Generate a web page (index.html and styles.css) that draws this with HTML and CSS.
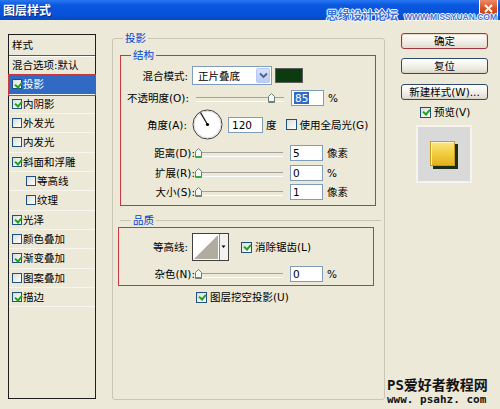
FILE: index.html
```html
<!DOCTYPE html>
<html>
<head>
<meta charset="utf-8">
<title>图层样式</title>
<link rel="stylesheet" href="styles.css">
</head>
<body>
<div class="window">
  <header class="titlebar">
    <span class="title">图层样式</span>
    <span class="close"><svg width="9" height="9" viewBox="0 0 9 9"><path d="M1 1L8 8M8 1L1 8" stroke="#fff" stroke-width="2"/></svg></span>
    <div class="wm-top"><span class="wm-cn">思缘设计论坛</span><span class="wm-en">WWW.MISSYUAN.COM</span></div>
  </header>

  <div class="dialog">
    <aside class="styles-panel">
      <div class="panel-head">样式</div>
      <ul class="style-list">
        <li class="item">混合选项:默认</li>
        <li class="item sel"><span class="cb on"></span>投影</li>
        <li class="item"><span class="cb on"></span>内阴影</li>
        <li class="item"><span class="cb"></span>外发光</li>
        <li class="item"><span class="cb"></span>内发光</li>
        <li class="item"><span class="cb on"></span>斜面和浮雕</li>
        <li class="item sub"><span class="cb"></span>等高线</li>
        <li class="item sub"><span class="cb"></span>纹理</li>
        <li class="item"><span class="cb on"></span>光泽</li>
        <li class="item"><span class="cb"></span>颜色叠加</li>
        <li class="item"><span class="cb on"></span>渐变叠加</li>
        <li class="item"><span class="cb"></span>图案叠加</li>
        <li class="item"><span class="cb on"></span>描边</li>
      </ul>
    </aside>

    <fieldset class="main">
      <legend>投影</legend>
      <fieldset class="struct">
        <legend>结构</legend>
        <div class="row r1">
          <span class="lbl w67">混合模式:</span>
          <span class="select"><span class="sel-text">正片叠底</span><span class="dd"><svg width="9" height="7" viewBox="0 0 9 7"><path d="M1 1.5L4.5 5L8 1.5" fill="none" stroke="#4d6185" stroke-width="1.8"/></svg></span></span>
          <span class="swatch"></span>
        </div>
        <div class="row r2">
          <span class="lbl w68">不透明度(O):</span>
          <span class="slider s6"><svg class="thumb" style="left:72px" width="7" height="10" viewBox="0 0 7 10"><path d="M0.5 3.5L3.5 0.5L6.5 3.5V9.5H0.5Z" fill="#f4f8f2" stroke="#6f7f74"/><path d="M1 8.5H6" stroke="#3caa55"/></svg></span>
          <span class="input"><span class="hl">85</span></span>
          <span class="unit">%</span>
        </div>
        <div class="row r3">
          <span class="lbl w66">角度(A):</span>
          <svg class="dial" width="31" height="31" viewBox="0 0 31 31"><circle cx="15.5" cy="15.5" r="14.5" fill="#fff" stroke="#3a3a3a"/><circle cx="15.5" cy="15.5" r="13.3" fill="none" stroke="#dadada"/><line x1="15.5" y1="15.5" x2="8.5" y2="3.6" stroke="#222" stroke-width="1.3"/><circle cx="15.5" cy="15.5" r="1.6" fill="#000"/></svg>
          <span class="input wide">120</span>
          <span class="unit u3">度</span>
          <span class="cb big gl"></span>
          <span class="cbtext">使用全局光(G)</span>
        </div>
        <div class="row r4">
          <span class="lbl w74">距离(D):</span>
          <span class="slider"><svg class="thumb" style="left:0" width="7" height="10" viewBox="0 0 7 10"><path d="M0.5 3.5L3.5 0.5L6.5 3.5V9.5H0.5Z" fill="#f4f8f2" stroke="#6f7f74"/><path d="M1 8.5H6" stroke="#3caa55"/></svg></span>
          <span class="input">5</span>
          <span class="unit">像素</span>
        </div>
        <div class="row r5">
          <span class="lbl w74">扩展(R):</span>
          <span class="slider"><svg class="thumb" style="left:0" width="7" height="10" viewBox="0 0 7 10"><path d="M0.5 3.5L3.5 0.5L6.5 3.5V9.5H0.5Z" fill="#f4f8f2" stroke="#6f7f74"/><path d="M1 8.5H6" stroke="#3caa55"/></svg></span>
          <span class="input">0</span>
          <span class="unit">%</span>
        </div>
        <div class="row r6">
          <span class="lbl w74">大小(S):</span>
          <span class="slider"><svg class="thumb" style="left:0" width="7" height="10" viewBox="0 0 7 10"><path d="M0.5 3.5L3.5 0.5L6.5 3.5V9.5H0.5Z" fill="#f4f8f2" stroke="#6f7f74"/><path d="M1 8.5H6" stroke="#3caa55"/></svg></span>
          <span class="input">1</span>
          <span class="unit">像素</span>
        </div>
      </fieldset>

      <div class="q-head"><span>品质</span></div>
      <div class="quality">
        <div class="row q1">
          <span class="lbl w69">等高线:</span>
          <svg class="contour" width="37" height="28" viewBox="0 0 37 28"><rect x="0.5" y="0.5" width="36" height="27" fill="#fff" stroke="#404040"/><path d="M2 26L26 2V26Z" fill="#b0aca0"/><rect x="27" y="1" width="9" height="26" fill="#f3f2ee"/><line x1="27.5" y1="1" x2="27.5" y2="27" stroke="#8a8a8a"/><path d="M29.5 12.5h4l-2 2.5z" fill="#000"/></svg>
          <span class="cb big on aa"></span>
          <span class="cbtext">消除锯齿(L)</span>
        </div>
        <div class="row q2">
          <span class="lbl w76">杂色(N):</span>
          <span class="slider"><svg class="thumb" style="left:0" width="7" height="10" viewBox="0 0 7 10"><path d="M0.5 3.5L3.5 0.5L6.5 3.5V9.5H0.5Z" fill="#f4f8f2" stroke="#6f7f74"/><path d="M1 8.5H6" stroke="#3caa55"/></svg></span>
          <span class="input">0</span>
          <span class="unit">%</span>
        </div>
      </div>
      <div class="row knock"><span class="cb big on"></span><span class="cbtext">图层挖空投影(U)</span></div>
    </fieldset>

    <div class="actions">
      <div class="btn default">确定</div>
      <div class="btn b2">复位</div>
      <div class="btn b3">新建样式(W)...</div>
      <div class="preview-row"><span class="cb big on"></span><span class="cbtext">预览(V)</span></div>
      <div class="preview"><span class="chip"></span></div>
    </div>
  </div>

  <div class="wm-bottom"><div class="wm-b1">PS爱好者教程网</div><div class="wm-b2">www. psahz. com</div></div>
</div>
</body>
</html>
```

FILE: styles.css
```css
* { box-sizing: border-box; margin: 0; padding: 0; }
html, body { width: 500px; height: 409px; overflow: hidden; }
body {
  background: #ece9d8;
  font-family: "DejaVu Sans", "Noto Sans CJK SC", sans-serif;
  font-size: 10.5px;
  line-height: 14px;
  color: #000;
}
.window { position: relative; height: 409px; }

/* title bar */
.titlebar {
  position: relative;
  height: 20px;
  display: flex;
  align-items: flex-start;
  background: linear-gradient(#2a78f2, #0a58e0 25%, #0652d8 75%, #0a47c2);
}
.title {
  color: #fff;
  font-family: "Noto Sans CJK SC", sans-serif;
  font-weight: bold;
  font-size: 12px;
  line-height: 14px;
  padding: 3px 0 0 3px;
  text-shadow: 1px 1px 0 #0a2a7a;
}
.close {
  margin-left: auto;
  margin-right: 2px;
  width: 19px;
  height: 17px;
  border: 1px solid #fff;
  border-top: 0;
  border-radius: 0 0 3px 3px;
  background: linear-gradient(#ec8a68, #d9501f 55%, #c73c18);
  display: flex;
  align-items: center;
  justify-content: center;
}
.wm-top {
  position: absolute;
  left: 326px;
  top: 8px;
  display: flex;
  align-items: baseline;
  gap: 6px;
  z-index: 2;
}
.wm-cn {
  font-family: "Noto Sans CJK SC", sans-serif;
  font-size: 12px;
  line-height: 14px;
  font-weight: bold;
  color: #3f74d8;
  text-shadow: -1px 0 #fff, 1px 0 #fff, 0 -1px #fff, 0 1px #fff;
}
.wm-en {
  font-family: "Liberation Sans", sans-serif;
  font-size: 8.5px;
  font-weight: bold;
  color: #3f74d8;
  text-shadow: -1px 0 #fff, 1px 0 #fff, 0 -1px #fff, 0 1px #fff;
}

/* dialog layout */
.dialog {
  display: flex;
  align-items: flex-start;
  padding-left: 8px;
}

/* styles list */
.styles-panel {
  width: 88px;
  height: 365px;
  margin-top: 14px;
  border: 1px solid #1e1e1e;
}
.panel-head {
  height: 21px;
  padding: 3px 0 0 3px;
  border-bottom: 1px solid #5a5a5a;
  box-shadow: 0 1px 0 #fff;
}
.style-list { list-style: none; }
.item {
  height: 19.33px;
  display: flex;
  align-items: center;
  gap: 1px;
  padding-left: 3px;
  white-space: nowrap;
  border-bottom: 1px solid #f6f5ee;
}
.item.sub { padding-left: 17px; }
.item.sel {
  background: #316ac5;
  color: #fff;
  outline: 1px solid #c8393c;
}

/* checkboxes */
.cb {
  position: relative;
  flex: none;
  width: 10px;
  height: 10px;
  border: 1px solid #1c5180;
  background: linear-gradient(135deg, #dcdcd6, #fff);
}
.cb.big { width: 11px; height: 11px; }
.cb.on::after {
  content: "";
  position: absolute;
  left: 2.5px;
  top: 0.5px;
  width: 3px;
  height: 5px;
  border: solid #21a121;
  border-width: 0 2px 2px 0;
  transform: rotate(40deg);
}
.cbtext { margin-left: 3px; white-space: nowrap; }

/* main group */
.main {
  margin: 11px 0 0 16px;
  width: 273px;
  height: 369px;
  border: 1px solid #c9c6b5;
  border-radius: 3px;
  padding: 0 0 0 7px;
  min-width: 0;
}
.main > legend {
  margin-left: 3px;
  padding: 0 2px;
  color: #0046d5;
  line-height: 14px;
}
.struct {
  margin-top: 3px;
  width: 256px;
  border: 1px solid #c8383c;
  padding: 3px 0 3px 0;
  min-width: 0;
}
.struct > legend {
  margin-left: 10px;
  padding: 0 2px;
  color: #0046d5;
  line-height: 14px;
}

.row {
  display: flex;
  align-items: center;
  white-space: nowrap;
}
.r1 { height: 21px; }
.r2 { height: 23px; }
.r3 { height: 31px; }
.r4 { height: 20px; margin-top: 3px; }
.r5 { height: 19px; }
.r6 { height: 20px; }

.lbl { text-align: right; flex: none; }
.w66 { width: 66px; }
.w67 { width: 67px; }
.w68 { width: 68px; }
.w69 { width: 69px; }
.w74 { width: 74px; }
.w76 { width: 76px; }

/* select */
.select {
  margin-left: 4px;
  width: 80px;
  height: 19px;
  border: 1px solid #7f9db9;
  background: #fff;
  display: flex;
  align-items: center;
  justify-content: space-between;
  padding: 1px;
}
.sel-text { padding-left: 4px; }
.dd {
  width: 14px;
  height: 15px;
  border: 1px solid #b5c8f3;
  border-radius: 2px;
  background: linear-gradient(#d6e2fd, #b9cdf8);
  display: flex;
  align-items: center;
  justify-content: center;
}
.swatch {
  margin-left: 3px;
  width: 28px;
  height: 15px;
  background: #0b3b0e;
  border: 1px solid #5d5d5d;
}

/* slider */
.slider {
  position: relative;
  flex: none;
  width: 88px;
  height: 10px;
}
.slider::before {
  content: "";
  position: absolute;
  left: 0;
  right: 0;
  top: 4px;
  height: 3px;
  border-top: 1px solid #a3a3a0;
  border-bottom: 1px solid #fff;
}
.slider.s6 { margin-left: 7px; }
.thumb { position: absolute; top: 0; }

/* inputs */
.input {
  margin-left: 7px;
  width: 33px;
  height: 16px;
  border: 1px solid #7f9db9;
  background: #fff;
  padding-left: 2px;
  display: flex;
  align-items: center;
  flex: none;
}
.input.wide { margin-left: 5px; width: 35px; padding-left: 3px; }
.hl { background: #316ac5; color: #fff; padding: 0 1px; line-height: 12px; }
.unit { margin-left: 4px; }
.unit.u3 { margin-left: 3px; }
.dial { margin-left: 5px; flex: none; }
.gl { margin-left: 9px; }

/* quality */
.q-head {
  margin-top: 7px;
  height: 14px;
  display: flex;
  align-items: center;
  color: #0046d5;
  margin-right: 3px;
}
.q-head::before {
  content: "";
  width: 11px;
  height: 1px;
  background: #c9c6b5;
}
.q-head::after {
  content: "";
  flex: 1;
  height: 1px;
  background: #c9c6b5;
}
.q-head span { padding: 0 2px; }
.quality {
  margin-left: -2px;
  width: 256px;
  height: 59px;
  border: 1px solid #c8383c;
  padding: 5px 0 0 0;
}
.q1 { height: 28px; }
.q2 { height: 18px; margin-top: 4px; }
.contour { margin-left: 4px; flex: none; }
.aa { margin-left: 12px; }
.knock { margin-top: 3px; height: 16px; padding-left: 76px; }

/* actions */
.actions {
  margin: 13px 0 0 16px;
  width: 87px;
  display: flex;
  flex-direction: column;
}
.btn {
  height: 16px;
  display: flex;
  align-items: center;
  justify-content: center;
  border: 1px solid #2f4c70;
  border-radius: 3px;
  background: linear-gradient(#fff, #f5f4ee 40%, #e6e3d6 85%, #d6d0c5);
  white-space: nowrap;
}
.btn.default { border-color: #a0343f; box-shadow: inset 0 0 0 1px #f3d9c8; }
.btn.b2 { margin-top: 9px; }
.btn.b3 { margin-top: 10px; }
.preview-row {
  margin-top: 5px;
  height: 14px;
  display: flex;
  align-items: center;
  padding-left: 19px;
}
.preview {
  margin: 6px 0 0 15px;
  width: 56px;
  height: 58px;
  background: #d9d9d9;
  border: 2px solid #f5f4ef;
  display: flex;
  align-items: center;
  justify-content: center;
}
.chip {
  width: 25px;
  height: 25px;
  margin: -2px 0 0 -3px;
  background: linear-gradient(#fbe786, #f3cf45 45%, #e3b21f);
  border: 1px solid #c99a1c;
  box-shadow: inset 1px 1px 0 #fff6c0, 3px 3px 0 #1b2f17;
}

/* bottom watermark */
.wm-bottom {
  position: absolute;
  left: 387px;
  top: 377px;
  color: #141414;
  font-weight: bold;
}
.wm-b1 {
  font-family: "DejaVu Sans Mono", "Noto Sans CJK SC", monospace;
  font-size: 14px;
  line-height: 16px;
}
.wm-b2 {
  font-family: "DejaVu Sans Mono", monospace;
  font-size: 11px;
  line-height: 13px;
}
```
